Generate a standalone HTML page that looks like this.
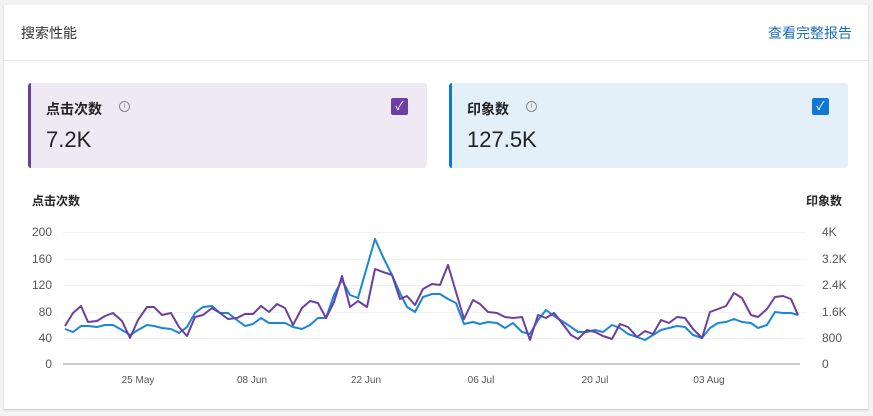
<!DOCTYPE html>
<html><head><meta charset="utf-8"><style>
body{margin:0;width:873px;height:416px;background:#f3f3f3;font-family:"Liberation Sans","Noto Sans CJK SC",sans-serif;position:relative;overflow:hidden}
.card{position:absolute;left:4px;top:5px;width:864px;height:404px;background:#fff;box-shadow:0 1px 2px rgba(0,0,0,.2)}
.hdr{position:absolute;left:0;top:0;width:864px;height:55px;border-bottom:1px solid #e8e8e8}
.t{position:absolute;left:17px;top:18px;font-size:14px;color:#333}
.lnk{position:absolute;right:16px;top:18px;font-size:14px;color:#1a6fc0}
.m{position:absolute;top:78px;width:396px;height:85px;border-radius:3px}
.m .n{position:absolute;left:15px;top:16px;font-size:14px;font-weight:bold;color:#222}
.m .i{position:absolute;top:18px;width:9px;height:9px;border:1px solid #888;border-radius:50%;font-size:7px;color:#888;text-align:center;line-height:9px}
.m .v{position:absolute;left:15px;top:44px;font-size:22px;color:#222}
.cb{position:absolute;left:360px;top:15px;width:17px;height:17px;border-radius:2px;color:#fff;font-size:12px;text-align:center;line-height:17px}
.ax{position:absolute;font-size:11px;color:#555}
</style></head><body>
<div class="card">
<div class="hdr"><div class="t">搜索性能</div><div class="lnk">查看完整报告</div></div>
<div class="m" style="left:24px;background:#efe9f4;border-left:3px solid #6b3fa0"><div class="n">点击次数</div><div class="i" style="left:88px">i</div><div class="v">7.2K</div><div class="cb" style="background:#6e3fa3">✓</div></div>
<div class="m" style="left:445px;background:#e3f0fa;border-left:3px solid #0f78d4"><div class="n">印象数</div><div class="i" style="left:74px">i</div><div class="v">127.5K</div><div class="cb" style="background:#0f78d4">✓</div></div>
</div>
<div class="ax" style="left:32px;top:192px;font-weight:bold;color:#222;font-size:12px">点击次数</div>
<div class="ax" style="left:806px;top:192px;font-weight:bold;color:#222;font-size:12px">印象数</div>
<svg style="position:absolute;left:0;top:0" width="873" height="416">
<g stroke="#f2f2f2" stroke-width="1"><line x1="63" x2="806" y1="232.5" y2="232.5"/><line x1="63" x2="806" y1="259.5" y2="259.5"/><line x1="63" x2="806" y1="285.5" y2="285.5"/><line x1="63" x2="806" y1="312.5" y2="312.5"/><line x1="63" x2="806" y1="338.5" y2="338.5"/></g>
<line x1="63" x2="800" y1="364" y2="364" stroke="#999" stroke-width="1"/>
<g font-family="Liberation Sans" font-size="12" fill="#555" text-anchor="end"><text x="52" y="236">200</text><text x="52" y="263">160</text><text x="52" y="289">120</text><text x="52" y="316">80</text><text x="52" y="342">40</text><text x="52" y="368">0</text></g>
<g font-family="Liberation Sans" font-size="12" fill="#555"><text x="822" y="236">4K</text><text x="822" y="263">3.2K</text><text x="822" y="289">2.4K</text><text x="822" y="316">1.6K</text><text x="822" y="342">800</text><text x="822" y="368">0</text></g>
<g font-family="Liberation Sans" font-size="10" fill="#555" text-anchor="middle"><text x="138" y="383">25 May</text><text x="252" y="383">08 Jun</text><text x="366" y="383">22 Jun</text><text x="481" y="383">06 Jul</text><text x="595" y="383">20 Jul</text><text x="709" y="383">03 Aug</text></g>
<polyline fill="none" stroke="#1a86d8" stroke-width="2" stroke-linejoin="round" points="65,329 73,332 81,326 88,326 97,327 105,325 113,325 122,330 130,335 138,330 147,325 154,326 162,328 171,329 179,333 187,327 195,313 203,307 212,306 220,313 228,313 237,320 245,326 253,324 261,318 269,323 277,323 285,323 293,327 302,329 310,325 318,318 326,318 334,295 342,280 350,295 358,298 375,239 383,257 392,275 400,293 407,307 415,312 423,297 432,294 440,294 448,299 456,303 464,324 473,322 480,324 488,322 497,323 505,328 513,323 522,332 530,334 538,320 546,310 554,316 562,321 571,327 578,332 587,332 595,330 603,332 612,325 620,328 628,334 637,337 645,340 653,335 661,330 669,328 677,326 685,327 693,335 702,338 710,328 718,323 726,322 734,319 742,322 751,323 758,328 767,325 775,312 783,313 791,313 798,315"/>
<polyline fill="none" stroke="#6b3fa0" stroke-width="2" stroke-linejoin="round" points="65,326 73,313 81,306 88,322 97,321 105,316 113,313 122,321 130,338 138,320 147,307 154,307 162,315 171,313 179,327 187,336 195,317 203,315 212,308 220,313 228,319 237,318 245,314 253,314 261,306 269,312 277,304 285,308 293,325 302,308 310,301 318,303 326,318 334,302 342,276 350,307 358,301 367,307 375,269 383,272 392,275 400,299 407,296 415,305 423,289 432,284 440,285 448,265 464,319 473,300 480,304 488,312 497,313 505,317 513,318 522,317 530,340 538,315 546,318 554,313 562,323 571,335 578,339 587,330 595,332 603,336 612,339 620,324 628,327 637,337 645,331 653,334 661,320 669,323 677,317 685,318 693,329 702,338 710,312 718,309 726,306 734,293 742,298 751,315 758,317 767,309 775,297 783,296 791,299 798,315"/>
</svg>
</body></html>
